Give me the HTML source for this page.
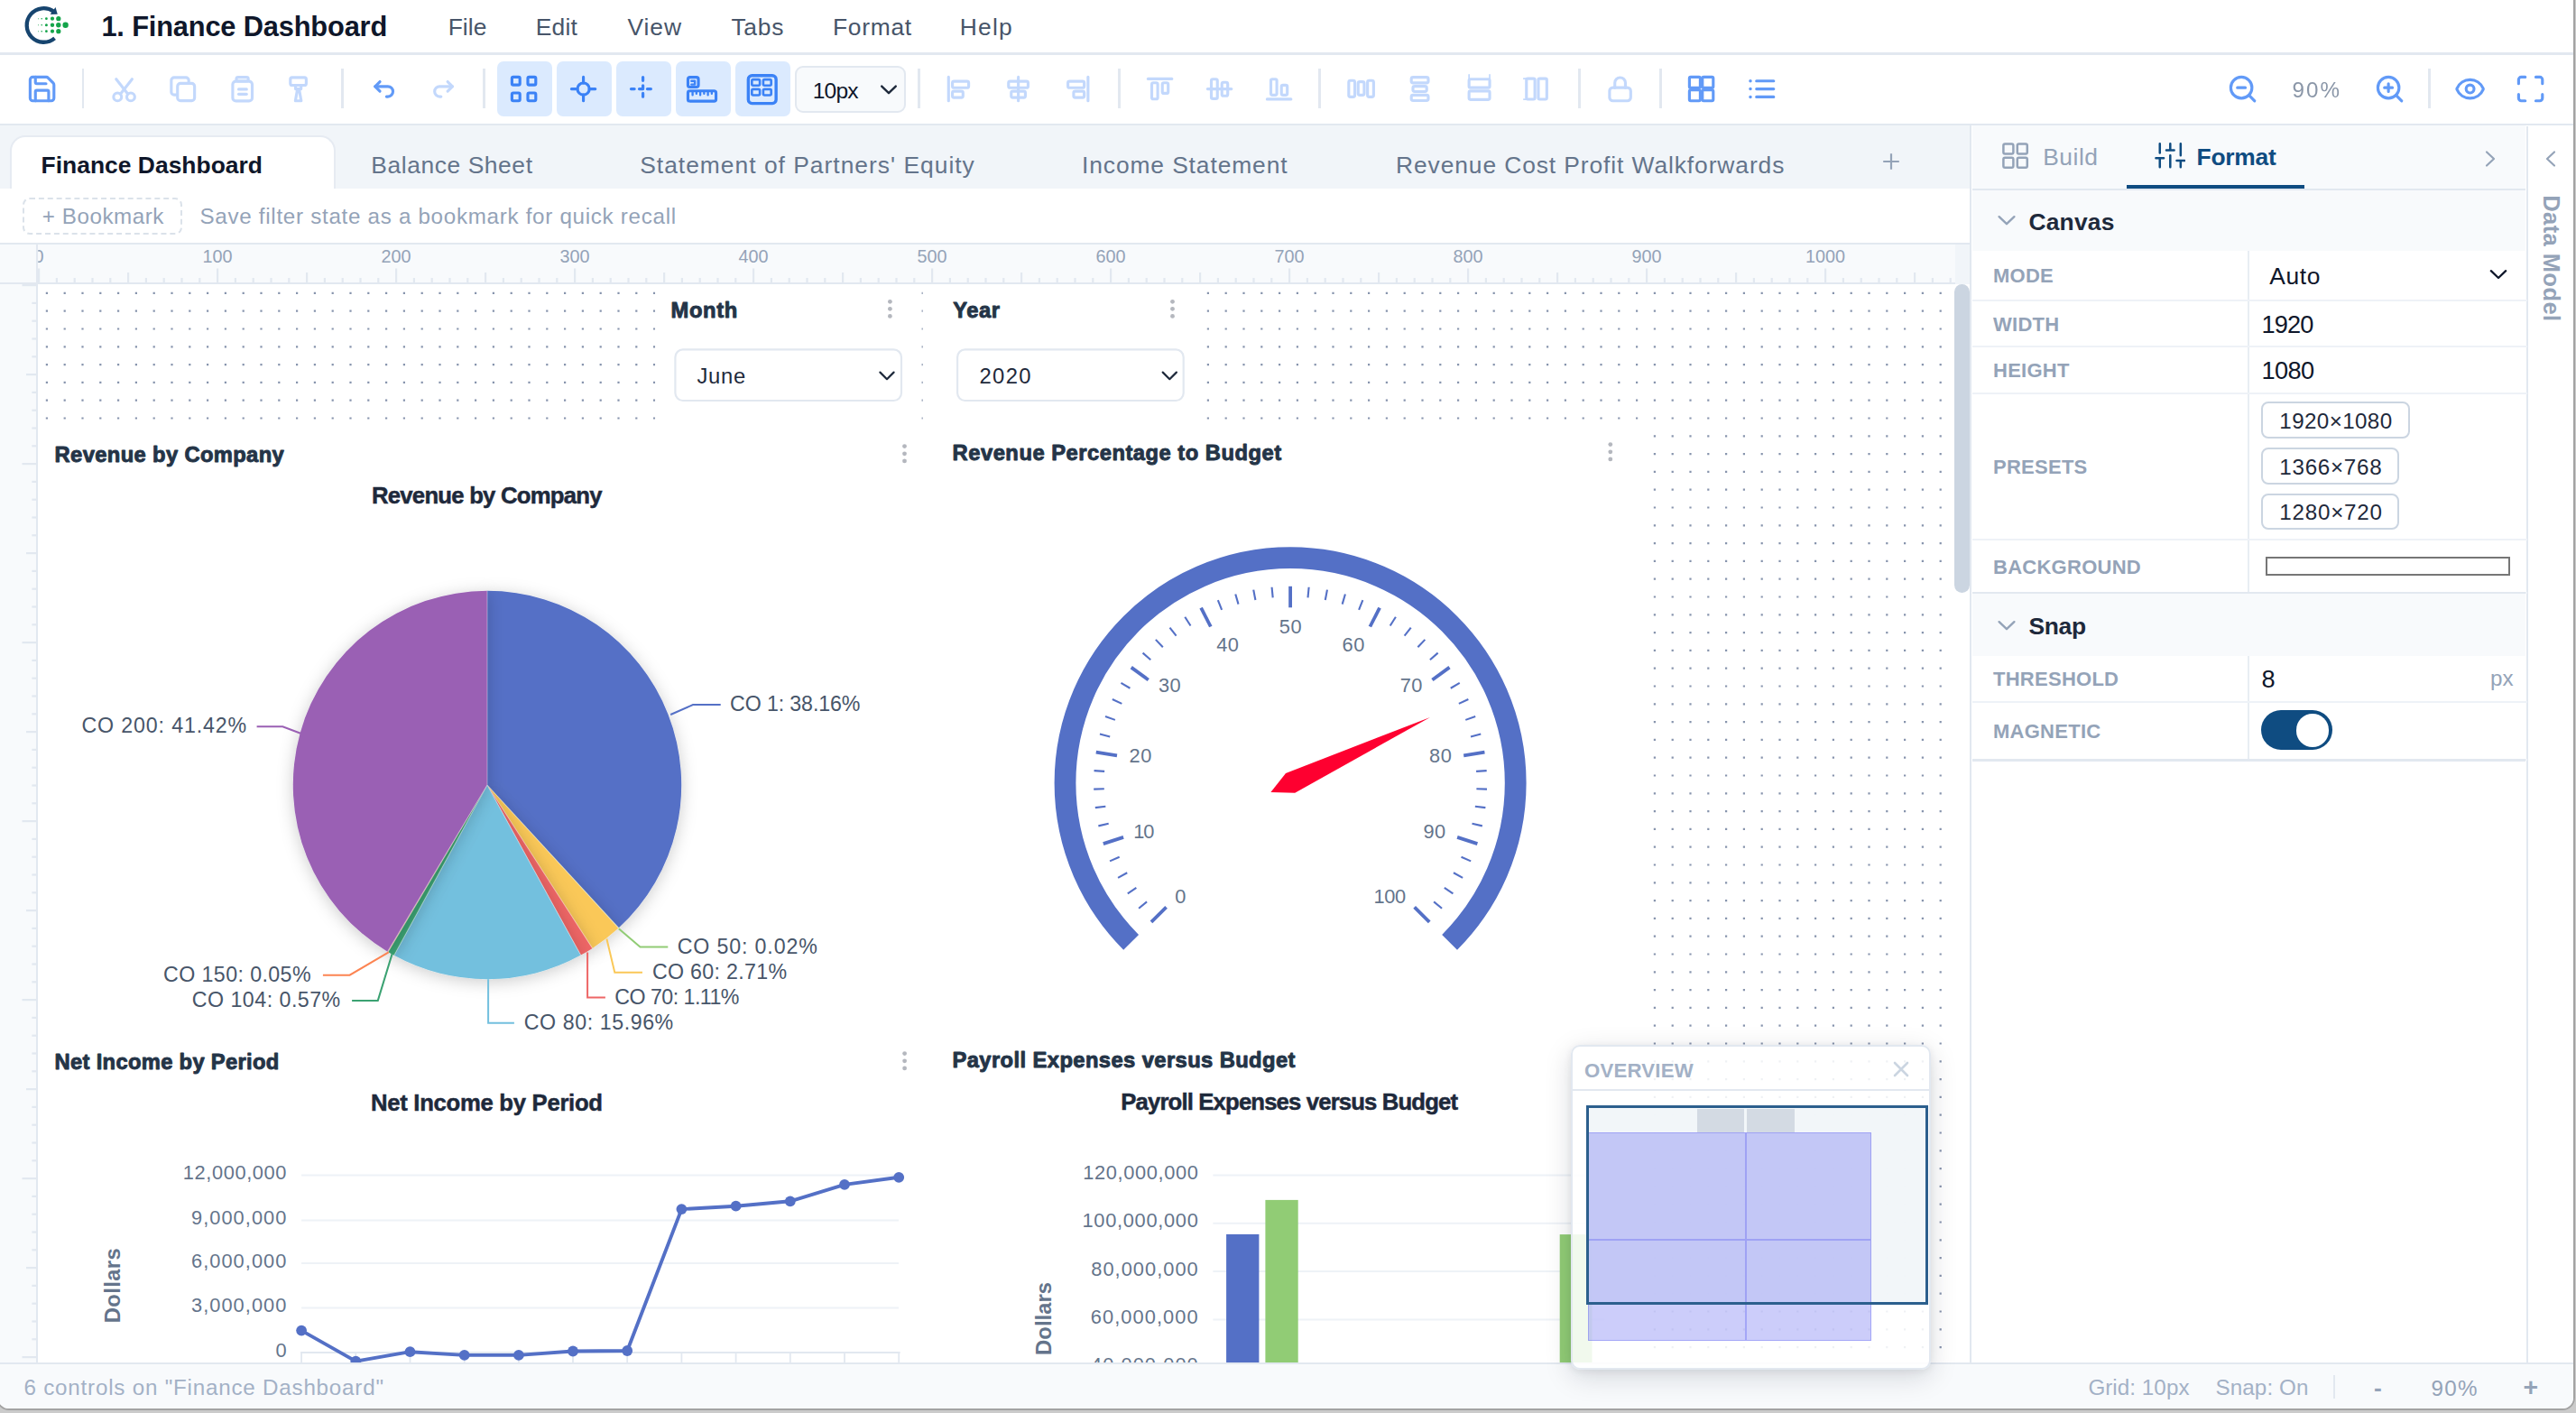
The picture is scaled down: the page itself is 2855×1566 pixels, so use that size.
<!DOCTYPE html>
<html><head><meta charset="utf-8"><title>1. Finance Dashboard</title>
<style>
html,body{margin:0;padding:0}
body{width:2855px;height:1566px;overflow:hidden;background:#cbcbcb;font-family:"Liberation Sans",sans-serif;position:relative}
.b{position:absolute;display:block}
.tx{left:0;top:0;overflow:visible;font-family:"Liberation Sans",sans-serif;white-space:pre}
#win{position:absolute;left:-4.4px;top:-40px;width:2858.3px;height:1602.8px;border:2.3px solid #a3a3a3;border-radius:14px;box-sizing:border-box;overflow:hidden;background:#fff}
#in{position:absolute;left:2.9px;top:38.6px;width:2855px;height:1566px}
</style></head><body>
<div id="win"><div id="in">
<div class="b" style="left:-4.00px;top:-4.00px;width:2860.00px;height:62.00px;background:#fff;"></div>
<div class="b" style="left:-4.00px;top:57.80px;width:2860.00px;height:2.20px;background:#e2e8f0;"></div>
<svg class="b" style="left:24px;top:2px" width="56" height="52" viewBox="0 0 56 52">
<path d="M34.55 9.76 A18.8 18.8 0 1 0 35.58 39.37" fill="none" stroke="#17456f" stroke-width="4.3"/>
<path d="M38.76 12.82 L36.52 5.0 L30.64 13.1 Z" fill="#17456f"/>
<g fill="#14a44a"><circle cx="47.6" cy="24.7" r="3.2"/>
<circle cx="39.8" cy="17.7" r="2.6"/><circle cx="39.8" cy="24.7" r="2.7"/><circle cx="39.8" cy="31.7" r="2.6"/>
<circle cx="33" cy="17.7" r="2.1"/><circle cx="33" cy="24.7" r="2.2"/><circle cx="33" cy="31.7" r="2.1"/>
<circle cx="26.4" cy="17.7" r="1.4"/><circle cx="26.4" cy="24.7" r="1.5"/><circle cx="26.4" cy="31.7" r="1.4"/>
<circle cx="21.2" cy="17.7" r="0.8"/><circle cx="21.2" cy="24.7" r="0.8"/><circle cx="21.2" cy="31.7" r="0.8"/>
<circle cx="17.6" cy="17.7" r="0.5"/><circle cx="17.6" cy="24.7" r="0.5"/><circle cx="17.6" cy="31.7" r="0.5"/></g></svg>
<svg class="b tx" width="1" height="1"><text x="111.40" y="38.80" font-size="30.8" font-weight="700" fill="#0f172a" letter-spacing="-0.168">1. Finance Dashboard</text></svg>
<svg class="b tx" width="1" height="1"><text x="495.70" y="38.00" font-size="26.4" fill="#475569" letter-spacing="0.033">File</text></svg>
<svg class="b tx" width="1" height="1"><text x="592.80" y="38.00" font-size="26.4" fill="#475569" letter-spacing="0.200">Edit</text></svg>
<svg class="b tx" width="1" height="1"><text x="694.50" y="38.00" font-size="26.4" fill="#475569" letter-spacing="0.933">View</text></svg>
<svg class="b tx" width="1" height="1"><text x="809.40" y="38.00" font-size="26.4" fill="#475569" letter-spacing="0.733">Tabs</text></svg>
<svg class="b tx" width="1" height="1"><text x="922.00" y="38.00" font-size="26.4" fill="#475569" letter-spacing="0.720">Format</text></svg>
<svg class="b tx" width="1" height="1"><text x="1062.80" y="38.00" font-size="26.4" fill="#475569" letter-spacing="1.233">Help</text></svg>
<div class="b" style="left:-4.00px;top:60.00px;width:2860.00px;height:76.60px;background:#fff;"></div>
<div class="b" style="left:-4.00px;top:136.60px;width:2860.00px;height:2.30px;background:#e2e8f0;"></div>
<div class="b" style="left:90.00px;top:75.40px;width:2.70px;height:44.00px;background:#e2e8f0;"></div>
<div class="b" style="left:377.80px;top:75.40px;width:2.70px;height:44.00px;background:#e2e8f0;"></div>
<div class="b" style="left:534.40px;top:75.40px;width:2.70px;height:44.00px;background:#e2e8f0;"></div>
<div class="b" style="left:1016.90px;top:75.40px;width:2.70px;height:44.00px;background:#e2e8f0;"></div>
<div class="b" style="left:1238.80px;top:75.40px;width:2.70px;height:44.00px;background:#e2e8f0;"></div>
<div class="b" style="left:1460.90px;top:75.40px;width:2.70px;height:44.00px;background:#e2e8f0;"></div>
<div class="b" style="left:1748.70px;top:75.40px;width:2.70px;height:44.00px;background:#e2e8f0;"></div>
<div class="b" style="left:1838.80px;top:75.40px;width:2.70px;height:44.00px;background:#e2e8f0;"></div>
<div class="b" style="left:2690.90px;top:75.40px;width:2.70px;height:44.00px;background:#e2e8f0;"></div>
<svg class="b" style="left:28.90px;top:80.80px;opacity:0.8;" width="35.2" height="35.2" viewBox="0 0 24 24" fill="none" stroke="#3b82f6" stroke-width="2.15" stroke-linecap="round" stroke-linejoin="round"><path d="M15.2 3a2 2 0 0 1 1.4.6l3.8 3.8a2 2 0 0 1 .6 1.4V19a2 2 0 0 1-2 2H5a2 2 0 0 1-2-2V5a2 2 0 0 1 2-2z"/><path d="M17 21v-7a1 1 0 0 0-1-1H8a1 1 0 0 0-1 1v7"/><path d="M7 3v4a1 1 0 0 0 1 1h7"/></svg>
<svg class="b" style="left:119.00px;top:80.80px;opacity:0.3;" width="35.2" height="35.2" viewBox="0 0 24 24" fill="none" stroke="#3b82f6" stroke-width="2.15" stroke-linecap="round" stroke-linejoin="round"><circle cx="7" cy="18" r="3"/><circle cx="17" cy="18" r="3"/><path d="M9.15 15.85 18 4.6"/><path d="M6 4.6l8.85 11.25"/></svg>
<svg class="b" style="left:184.80px;top:80.80px;opacity:0.3;" width="35.2" height="35.2" viewBox="0 0 24 24" fill="none" stroke="#3b82f6" stroke-width="2.15" stroke-linecap="round" stroke-linejoin="round"><rect x="3.3" y="3.3" width="13.2" height="13.2" rx="2.2"/><rect x="8" y="7.8" width="12.9" height="13.1" rx="2.2" fill="#fff"/></svg>
<svg class="b" style="left:250.90px;top:80.80px;opacity:0.3;" width="35.2" height="35.2" viewBox="0 0 24 24" fill="none" stroke="#3b82f6" stroke-width="2.15" stroke-linecap="round" stroke-linejoin="round"><rect x="4.7" y="6.2" width="14.75" height="14.9" rx="2.4"/><rect x="7.5" y="3.2" width="9" height="2.9" rx="1.3" fill="#fff"/><path d="M9.2 12.2h6"/><path d="M9.2 15.9h6"/></svg>
<svg class="b" style="left:312.80px;top:80.80px;opacity:0.3;" width="35.2" height="35.2" viewBox="0 0 24 24" fill="none" stroke="#3b82f6" stroke-width="2.15" stroke-linecap="round" stroke-linejoin="round"><rect x="6" y="3.3" width="12" height="5.9" rx="1.4"/><path d="M9.9 9.4v2.6h4.2V9.4"/><path d="M11.2 13.2h1.6l1.4 7.8H9.8z"/></svg>
<svg class="b" style="left:407.80px;top:80.80px;opacity:0.8;" width="35.2" height="35.2" viewBox="0 0 24 24" fill="none" stroke="#3b82f6" stroke-width="2.15" stroke-linecap="round" stroke-linejoin="round"><path d="M8.9 13.7 5.3 10.1l3.6-3.6"/><path d="M5.3 10.1h9.6a3.85 3.85 0 1 1 0 7.7h-1"/></svg>
<svg class="b" style="left:473.00px;top:80.80px;opacity:0.3;" width="35.2" height="35.2" viewBox="0 0 24 24" fill="none" stroke="#3b82f6" stroke-width="2.15" stroke-linecap="round" stroke-linejoin="round"><path d="M15.1 13.7l3.6-3.6-3.6-3.6"/><path d="M18.7 10.1H9.1a3.85 3.85 0 1 0 0 7.7h1"/></svg>
<div class="b" style="left:550.10px;top:67.00px;width:61.80px;height:61.90px;background:#dbeafe;border-radius:7px;"></div>
<div class="b" style="left:616.10px;top:67.00px;width:61.80px;height:61.90px;background:#dbeafe;border-radius:7px;"></div>
<div class="b" style="left:682.10px;top:67.00px;width:61.80px;height:61.90px;background:#dbeafe;border-radius:7px;"></div>
<div class="b" style="left:748.10px;top:67.00px;width:61.80px;height:61.90px;background:#dbeafe;border-radius:7px;"></div>
<div class="b" style="left:814.10px;top:67.00px;width:61.80px;height:61.90px;background:#dbeafe;border-radius:7px;"></div>
<svg class="b" style="left:562.50px;top:80.50px;opacity:1;" width="35.2" height="35.2" viewBox="0 0 24 24" fill="none" stroke="#3b82f6" stroke-width="2.15" stroke-linecap="round" stroke-linejoin="round"><rect x="3" y="3" width="6" height="6" rx="1"/><rect x="15" y="3" width="6" height="6" rx="1"/><rect x="3" y="15" width="6" height="6" rx="1"/><rect x="15" y="15" width="6" height="6" rx="1"/></svg>
<svg class="b" style="left:628.50px;top:80.50px;opacity:1;" width="35.2" height="35.2" viewBox="0 0 24 24" fill="none" stroke="#3b82f6" stroke-width="2.15" stroke-linecap="round" stroke-linejoin="round"><circle cx="12" cy="12" r="4.5"/><path d="M12 3v4.5M12 16.5V21M3 12h4.5M16.5 12H21"/></svg>
<svg class="b" style="left:694.80px;top:80.60px;opacity:1;" width="35.2" height="35.2" viewBox="0 0 24 24" fill="none" stroke="#3b82f6" stroke-width="2.15" stroke-linecap="round" stroke-linejoin="round"><path d="M3.05 12h2.5M9.2 12H12M15.3 12h2.7M12 3.15v2.5M12 9.4V12M12 15.3v2.6" stroke-width="2.2"/></svg>
<svg class="b" style="left:760.60px;top:80.40px;opacity:1;overflow:visible;" width="35.2" height="35.2" viewBox="0 0 24 24" fill="none" stroke="#3b82f6" stroke-width="2.15" stroke-linecap="round" stroke-linejoin="round"><rect x="1" y="13.5" width="21.2" height="7.7" rx="1.5"/><rect x="1" y="3.2" width="7.9" height="7.4" rx="1.5"/><path d="M3.6 6h2.6v2.6H3.6" stroke-width="1.6"/><path d="M4.5 14v2.6M7.4 14v1.5M10.3 14v2.6M13.2 14v1.5M16.1 14v2.6M19 14v1.5" stroke-width="1.6"/></svg>
<svg class="b" style="left:826.30px;top:80.30px;opacity:1;overflow:visible;" width="35.2" height="35.2" viewBox="0 0 24 24" fill="none" stroke="#3b82f6" stroke-width="2.15" stroke-linecap="round" stroke-linejoin="round"><rect x="1.6" y="1.9" width="21" height="21" rx="2.8" stroke-width="2.3"/><g stroke-width="1.8"><rect x="4.3" y="4.9" width="6" height="4.5" rx="1"/><rect x="12.9" y="4.9" width="6" height="4.5" rx="1"/><rect x="4.3" y="12.2" width="6" height="4.5" rx="1"/><rect x="12.9" y="12.2" width="6" height="4.5" rx="1"/></g></svg>
<div class="b" style="left:880.40px;top:72.60px;width:123.20px;height:51.90px;background:#f8fafc;border:2.2px solid #e2e8f0;border-radius:9px;box-sizing:border-box;"></div>
<svg class="b tx" width="1" height="1"><text x="899.70" y="107.60" font-size="24.6" fill="#0f172a" letter-spacing="-0.833">10px</text></svg>
<svg class="b" style="left:973px;top:89px" width="22" height="18" viewBox="0 0 22 18" fill="none" stroke="#1e293b" stroke-width="2.4" stroke-linecap="round" stroke-linejoin="round"><path d="M3.2 5.6 11 13.2 18.8 5.6"/></svg>
<svg class="b" style="left:1044.90px;top:80.80px;opacity:0.3;" width="35.2" height="35.2" viewBox="0 0 24 24" fill="none" stroke="#3b82f6" stroke-width="2.15" stroke-linecap="round" stroke-linejoin="round"><path d="M4.3 3v18"/><rect x="7.2" y="6.2" width="12.3" height="4.9" rx="1.2"/><rect x="7.2" y="13.7" width="8" height="4.8" rx="1.2"/></svg>
<svg class="b" style="left:1110.20px;top:80.80px;opacity:0.3;" width="35.2" height="35.2" viewBox="0 0 24 24" fill="none" stroke="#3b82f6" stroke-width="2.15" stroke-linecap="round" stroke-linejoin="round"><path d="M12 3v18"/><rect x="4.6" y="6.2" width="14.8" height="4.9" rx="1.2"/><rect x="6.65" y="13.7" width="10.7" height="4.8" rx="1.2"/></svg>
<svg class="b" style="left:1176.90px;top:80.80px;opacity:0.3;" width="35.2" height="35.2" viewBox="0 0 24 24" fill="none" stroke="#3b82f6" stroke-width="2.15" stroke-linecap="round" stroke-linejoin="round"><path d="M19.7 3v18"/><rect x="4.5" y="6.2" width="12.3" height="4.9" rx="1.2"/><rect x="8.8" y="13.7" width="8" height="4.8" rx="1.2"/></svg>
<svg class="b" style="left:1267.20px;top:80.80px;opacity:0.3;" width="35.2" height="35.2" viewBox="0 0 24 24" fill="none" stroke="#3b82f6" stroke-width="2.15" stroke-linecap="round" stroke-linejoin="round"><path d="M3 4.4h18"/><rect x="5.8" y="7.3" width="4.5" height="12.3" rx="1.2"/><rect x="13.8" y="7.3" width="4.4" height="8" rx="1.2"/></svg>
<svg class="b" style="left:1333.00px;top:80.80px;opacity:0.3;" width="35.2" height="35.2" viewBox="0 0 24 24" fill="none" stroke="#3b82f6" stroke-width="2.15" stroke-linecap="round" stroke-linejoin="round"><path d="M3 12h18"/><rect x="5.8" y="4.6" width="4.6" height="14.8" rx="1.2"/><rect x="13.8" y="7" width="4.4" height="10.2" rx="1.2"/></svg>
<svg class="b" style="left:1399.00px;top:80.80px;opacity:0.3;" width="35.2" height="35.2" viewBox="0 0 24 24" fill="none" stroke="#3b82f6" stroke-width="2.15" stroke-linecap="round" stroke-linejoin="round"><path d="M3 19.7h18"/><rect x="5.8" y="4.6" width="4.5" height="12" rx="1.2"/><rect x="13.8" y="9.1" width="4.4" height="7.5" rx="1.2"/></svg>
<svg class="b" style="left:1490.10px;top:80.80px;opacity:0.3;" width="35.2" height="35.2" viewBox="0 0 24 24" fill="none" stroke="#3b82f6" stroke-width="2.15" stroke-linecap="round" stroke-linejoin="round"><rect x="2.6" y="5.6" width="4.6" height="12.4" rx="1.3"/><rect x="9.7" y="6.6" width="4.6" height="10" rx="1.3"/><rect x="16.8" y="5.6" width="4.6" height="12.4" rx="1.3"/></svg>
<svg class="b" style="left:1555.90px;top:80.80px;opacity:0.3;" width="35.2" height="35.2" viewBox="0 0 24 24" fill="none" stroke="#3b82f6" stroke-width="2.15" stroke-linecap="round" stroke-linejoin="round"><rect x="5.6" y="3.2" width="12.8" height="4.2" rx="1.3"/><rect x="6.8" y="10" width="10.4" height="4" rx="1.3"/><rect x="5.6" y="16.6" width="12.8" height="4.2" rx="1.3"/></svg>
<svg class="b" style="left:1621.90px;top:80.80px;opacity:0.3;" width="35.2" height="35.2" viewBox="0 0 24 24" fill="none" stroke="#3b82f6" stroke-width="2.15" stroke-linecap="round" stroke-linejoin="round"><path d="M4.2 1.2v3M19.8 1.2v3" stroke-width="1.2"/><rect x="4.2" y="4.6" width="15.6" height="6.4" rx="1"/><rect x="4.2" y="13.6" width="15.6" height="6.4" rx="1"/></svg>
<svg class="b" style="left:1684.80px;top:80.80px;opacity:0.3;" width="35.2" height="35.2" viewBox="0 0 24 24" fill="none" stroke="#3b82f6" stroke-width="2.15" stroke-linecap="round" stroke-linejoin="round"><path d="M2.6 4.2h3M2.6 19.8h3" stroke-width="1.2"/><rect x="4.6" y="4.2" width="6.4" height="15.6" rx="1"/><rect x="13.6" y="4.2" width="6.4" height="15.6" rx="1"/></svg>
<svg class="b" style="left:1777.80px;top:80.80px;opacity:0.3;" width="35.2" height="35.2" viewBox="0 0 24 24" fill="none" stroke="#3b82f6" stroke-width="2.15" stroke-linecap="round" stroke-linejoin="round"><rect x="4" y="11" width="16" height="10" rx="2.5"/><path d="M8 11V7.4a4 4 0 0 1 8 0V11"/></svg>
<svg class="b" style="left:1867.80px;top:80.80px;opacity:0.8;" width="35.2" height="35.2" viewBox="0 0 24 24" fill="none" stroke="#3b82f6" stroke-width="2.15" stroke-linecap="round" stroke-linejoin="round"><rect x="3" y="3" width="8.2" height="8.2" rx="1"/><rect x="12.8" y="3" width="8.2" height="8.2" rx="1"/><rect x="12.8" y="12.8" width="8.2" height="8.2" rx="1"/><rect x="3" y="12.8" width="8.2" height="8.2" rx="1"/></svg>
<svg class="b" style="left:1934.40px;top:80.80px;opacity:0.8;" width="35.2" height="35.2" viewBox="0 0 24 24" fill="none" stroke="#3b82f6" stroke-width="2.15" stroke-linecap="round" stroke-linejoin="round"><path d="M3.4 6h.01M3.4 12h.01M3.4 18h.01" stroke-width="2.4"/><path d="M8 6h13M8 12h13M8 18h13"/></svg>
<svg class="b" style="left:2467.60px;top:80.80px;opacity:0.8;" width="35.2" height="35.2" viewBox="0 0 24 24" fill="none" stroke="#3b82f6" stroke-width="2.15" stroke-linecap="round" stroke-linejoin="round"><circle cx="11" cy="11" r="8"/><path d="M21 21l-4.35-4.35M8 11h6"/></svg>
<svg class="b tx" width="1" height="1"><text x="2539.60" y="107.30" font-size="24.2" fill="#64748b" letter-spacing="2.000" opacity="0.75">90%</text></svg>
<svg class="b" style="left:2630.70px;top:80.80px;opacity:0.8;" width="35.2" height="35.2" viewBox="0 0 24 24" fill="none" stroke="#3b82f6" stroke-width="2.15" stroke-linecap="round" stroke-linejoin="round"><circle cx="11" cy="11" r="8"/><path d="M21 21l-4.35-4.35M8 11h6M11 8v6"/></svg>
<svg class="b" style="left:2719.90px;top:80.80px;opacity:0.8;" width="35.2" height="35.2" viewBox="0 0 24 24" fill="none" stroke="#3b82f6" stroke-width="2.15" stroke-linecap="round" stroke-linejoin="round"><path d="M2.06 12.35a1 1 0 0 1 0-.7 10.75 10.75 0 0 1 19.88 0 1 1 0 0 1 0 .7 10.75 10.75 0 0 1-19.88 0"/><circle cx="12" cy="12" r="3"/></svg>
<svg class="b" style="left:2786.00px;top:80.80px;opacity:0.8;" width="35.2" height="35.2" viewBox="0 0 24 24" fill="none" stroke="#3b82f6" stroke-width="2.15" stroke-linecap="round" stroke-linejoin="round"><path d="M8 3H5a2 2 0 0 0-2 2v3M21 8V5a2 2 0 0 0-2-2h-3M3 16v3a2 2 0 0 0 2 2h3M16 21h3a2 2 0 0 0 2-2v-3"/></svg>
<div class="b" style="left:-4.00px;top:138.90px;width:2186.20px;height:69.70px;background:#f1f5f9;"></div>
<div class="b" style="left:10.60px;top:149.80px;width:361.30px;height:60.20px;background:#fff;border:2.2px solid #e6ebf2;border-bottom:none;border-radius:17px 17px 0 0;box-sizing:border-box;"></div>
<svg class="b tx" width="1" height="1"><text x="44.60" y="191.40" font-size="26.4" font-weight="700" fill="#0f172a" letter-spacing="0.025">Finance Dashboard</text></svg>
<svg class="b tx" width="1" height="1"><text x="410.30" y="191.40" font-size="26.4" fill="#64748b" letter-spacing="0.583">Balance Sheet</text></svg>
<svg class="b tx" width="1" height="1"><text x="708.20" y="191.40" font-size="26.4" fill="#64748b" letter-spacing="1.007">Statement of Partners' Equity</text></svg>
<svg class="b tx" width="1" height="1"><text x="1198.00" y="191.40" font-size="26.4" fill="#64748b" letter-spacing="0.893">Income Statement</text></svg>
<svg class="b tx" width="1" height="1"><text x="1546.00" y="191.40" font-size="26.4" fill="#64748b" letter-spacing="0.903">Revenue Cost Profit Walkforwards</text></svg>
<svg class="b" style="left:2084px;top:167px" width="22" height="22" viewBox="0 0 22 22" stroke="#94a3b8" stroke-width="2.2" fill="none"><path d="M11 2.2v17.6M2.2 11h17.6"/></svg>
<div class="b" style="left:-4.00px;top:208.60px;width:2186.20px;height:59.50px;background:#fff;"></div>
<div class="b" style="left:-4.00px;top:268.10px;width:2186.20px;height:2.20px;background:#e2e8f0;"></div>
<div class="b" style="left:24.50px;top:218.60px;width:176.50px;height:40.40px;border:2px dashed #dbe2ea;border-radius:8px;box-sizing:border-box;"></div>
<svg class="b tx" width="1" height="1"><text x="45.80" y="247.00" font-size="24.2" fill="#94a3b8" letter-spacing="0.544">+ Bookmark</text></svg>
<svg class="b tx" width="1" height="1"><text x="220.50" y="247.00" font-size="24.2" fill="#94a3b8" letter-spacing="0.700">Save filter state as a bookmark for quick recall</text></svg>
<div class="b" style="left:-0.8px;top:-0.9px;width:0;height:0">
<div class="b" style="left:-4.00px;top:271.20px;width:2171.20px;height:41.80px;background:#f8fafc;"></div>
<div class="b" style="left:2167.20px;top:271.20px;width:15.80px;height:44.00px;background:#f1f5f9;"></div>
<div class="b" style="left:-4.00px;top:313.00px;width:2171.20px;height:2.20px;background:#e2e8f0;"></div>
<div class="b" style="left:-4.00px;top:315.20px;width:44.00px;height:1195.80px;background:#f8fafc;"></div>
<div class="b" style="left:40.00px;top:271.20px;width:2.20px;height:1239.80px;background:#e2e8f0;"></div>
<svg class="b" style="left:0;top:0" width="2184" height="1512" viewBox="0 0 2184 1512"><g fill="#e2e8f0"><rect x="42.00" y="297.50" width="2.2" height="15.5"/><rect x="61.80" y="308.00" width="2.2" height="5"/><rect x="81.60" y="308.00" width="2.2" height="5"/><rect x="101.40" y="308.00" width="2.2" height="5"/><rect x="121.20" y="308.00" width="2.2" height="5"/><rect x="141.00" y="302.00" width="2.2" height="11"/><rect x="160.80" y="308.00" width="2.2" height="5"/><rect x="180.60" y="308.00" width="2.2" height="5"/><rect x="200.40" y="308.00" width="2.2" height="5"/><rect x="220.20" y="308.00" width="2.2" height="5"/><rect x="240.00" y="297.50" width="2.2" height="15.5"/><rect x="259.80" y="308.00" width="2.2" height="5"/><rect x="279.60" y="308.00" width="2.2" height="5"/><rect x="299.40" y="308.00" width="2.2" height="5"/><rect x="319.20" y="308.00" width="2.2" height="5"/><rect x="339.00" y="302.00" width="2.2" height="11"/><rect x="358.80" y="308.00" width="2.2" height="5"/><rect x="378.60" y="308.00" width="2.2" height="5"/><rect x="398.40" y="308.00" width="2.2" height="5"/><rect x="418.20" y="308.00" width="2.2" height="5"/><rect x="438.00" y="297.50" width="2.2" height="15.5"/><rect x="457.80" y="308.00" width="2.2" height="5"/><rect x="477.60" y="308.00" width="2.2" height="5"/><rect x="497.40" y="308.00" width="2.2" height="5"/><rect x="517.20" y="308.00" width="2.2" height="5"/><rect x="537.00" y="302.00" width="2.2" height="11"/><rect x="556.80" y="308.00" width="2.2" height="5"/><rect x="576.60" y="308.00" width="2.2" height="5"/><rect x="596.40" y="308.00" width="2.2" height="5"/><rect x="616.20" y="308.00" width="2.2" height="5"/><rect x="636.00" y="297.50" width="2.2" height="15.5"/><rect x="655.80" y="308.00" width="2.2" height="5"/><rect x="675.60" y="308.00" width="2.2" height="5"/><rect x="695.40" y="308.00" width="2.2" height="5"/><rect x="715.20" y="308.00" width="2.2" height="5"/><rect x="735.00" y="302.00" width="2.2" height="11"/><rect x="754.80" y="308.00" width="2.2" height="5"/><rect x="774.60" y="308.00" width="2.2" height="5"/><rect x="794.40" y="308.00" width="2.2" height="5"/><rect x="814.20" y="308.00" width="2.2" height="5"/><rect x="834.00" y="297.50" width="2.2" height="15.5"/><rect x="853.80" y="308.00" width="2.2" height="5"/><rect x="873.60" y="308.00" width="2.2" height="5"/><rect x="893.40" y="308.00" width="2.2" height="5"/><rect x="913.20" y="308.00" width="2.2" height="5"/><rect x="933.00" y="302.00" width="2.2" height="11"/><rect x="952.80" y="308.00" width="2.2" height="5"/><rect x="972.60" y="308.00" width="2.2" height="5"/><rect x="992.40" y="308.00" width="2.2" height="5"/><rect x="1012.20" y="308.00" width="2.2" height="5"/><rect x="1032.00" y="297.50" width="2.2" height="15.5"/><rect x="1051.80" y="308.00" width="2.2" height="5"/><rect x="1071.60" y="308.00" width="2.2" height="5"/><rect x="1091.40" y="308.00" width="2.2" height="5"/><rect x="1111.20" y="308.00" width="2.2" height="5"/><rect x="1131.00" y="302.00" width="2.2" height="11"/><rect x="1150.80" y="308.00" width="2.2" height="5"/><rect x="1170.60" y="308.00" width="2.2" height="5"/><rect x="1190.40" y="308.00" width="2.2" height="5"/><rect x="1210.20" y="308.00" width="2.2" height="5"/><rect x="1230.00" y="297.50" width="2.2" height="15.5"/><rect x="1249.80" y="308.00" width="2.2" height="5"/><rect x="1269.60" y="308.00" width="2.2" height="5"/><rect x="1289.40" y="308.00" width="2.2" height="5"/><rect x="1309.20" y="308.00" width="2.2" height="5"/><rect x="1329.00" y="302.00" width="2.2" height="11"/><rect x="1348.80" y="308.00" width="2.2" height="5"/><rect x="1368.60" y="308.00" width="2.2" height="5"/><rect x="1388.40" y="308.00" width="2.2" height="5"/><rect x="1408.20" y="308.00" width="2.2" height="5"/><rect x="1428.00" y="297.50" width="2.2" height="15.5"/><rect x="1447.80" y="308.00" width="2.2" height="5"/><rect x="1467.60" y="308.00" width="2.2" height="5"/><rect x="1487.40" y="308.00" width="2.2" height="5"/><rect x="1507.20" y="308.00" width="2.2" height="5"/><rect x="1527.00" y="302.00" width="2.2" height="11"/><rect x="1546.80" y="308.00" width="2.2" height="5"/><rect x="1566.60" y="308.00" width="2.2" height="5"/><rect x="1586.40" y="308.00" width="2.2" height="5"/><rect x="1606.20" y="308.00" width="2.2" height="5"/><rect x="1626.00" y="297.50" width="2.2" height="15.5"/><rect x="1645.80" y="308.00" width="2.2" height="5"/><rect x="1665.60" y="308.00" width="2.2" height="5"/><rect x="1685.40" y="308.00" width="2.2" height="5"/><rect x="1705.20" y="308.00" width="2.2" height="5"/><rect x="1725.00" y="302.00" width="2.2" height="11"/><rect x="1744.80" y="308.00" width="2.2" height="5"/><rect x="1764.60" y="308.00" width="2.2" height="5"/><rect x="1784.40" y="308.00" width="2.2" height="5"/><rect x="1804.20" y="308.00" width="2.2" height="5"/><rect x="1824.00" y="297.50" width="2.2" height="15.5"/><rect x="1843.80" y="308.00" width="2.2" height="5"/><rect x="1863.60" y="308.00" width="2.2" height="5"/><rect x="1883.40" y="308.00" width="2.2" height="5"/><rect x="1903.20" y="308.00" width="2.2" height="5"/><rect x="1923.00" y="302.00" width="2.2" height="11"/><rect x="1942.80" y="308.00" width="2.2" height="5"/><rect x="1962.60" y="308.00" width="2.2" height="5"/><rect x="1982.40" y="308.00" width="2.2" height="5"/><rect x="2002.20" y="308.00" width="2.2" height="5"/><rect x="2022.00" y="297.50" width="2.2" height="15.5"/><rect x="2041.80" y="308.00" width="2.2" height="5"/><rect x="2061.60" y="308.00" width="2.2" height="5"/><rect x="2081.40" y="308.00" width="2.2" height="5"/><rect x="2101.20" y="308.00" width="2.2" height="5"/><rect x="2121.00" y="302.00" width="2.2" height="11"/><rect x="2140.80" y="308.00" width="2.2" height="5"/><rect x="2160.60" y="308.00" width="2.2" height="5"/><rect x="24.50" y="315.00" width="15.5" height="2.2"/><rect x="35.40" y="334.80" width="4.6" height="2.2"/><rect x="35.40" y="354.60" width="4.6" height="2.2"/><rect x="35.40" y="374.40" width="4.6" height="2.2"/><rect x="35.40" y="394.20" width="4.6" height="2.2"/><rect x="29.00" y="414.00" width="11" height="2.2"/><rect x="35.40" y="433.80" width="4.6" height="2.2"/><rect x="35.40" y="453.60" width="4.6" height="2.2"/><rect x="35.40" y="473.40" width="4.6" height="2.2"/><rect x="35.40" y="493.20" width="4.6" height="2.2"/><rect x="24.50" y="513.00" width="15.5" height="2.2"/><rect x="35.40" y="532.80" width="4.6" height="2.2"/><rect x="35.40" y="552.60" width="4.6" height="2.2"/><rect x="35.40" y="572.40" width="4.6" height="2.2"/><rect x="35.40" y="592.20" width="4.6" height="2.2"/><rect x="29.00" y="612.00" width="11" height="2.2"/><rect x="35.40" y="631.80" width="4.6" height="2.2"/><rect x="35.40" y="651.60" width="4.6" height="2.2"/><rect x="35.40" y="671.40" width="4.6" height="2.2"/><rect x="35.40" y="691.20" width="4.6" height="2.2"/><rect x="24.50" y="711.00" width="15.5" height="2.2"/><rect x="35.40" y="730.80" width="4.6" height="2.2"/><rect x="35.40" y="750.60" width="4.6" height="2.2"/><rect x="35.40" y="770.40" width="4.6" height="2.2"/><rect x="35.40" y="790.20" width="4.6" height="2.2"/><rect x="29.00" y="810.00" width="11" height="2.2"/><rect x="35.40" y="829.80" width="4.6" height="2.2"/><rect x="35.40" y="849.60" width="4.6" height="2.2"/><rect x="35.40" y="869.40" width="4.6" height="2.2"/><rect x="35.40" y="889.20" width="4.6" height="2.2"/><rect x="24.50" y="909.00" width="15.5" height="2.2"/><rect x="35.40" y="928.80" width="4.6" height="2.2"/><rect x="35.40" y="948.60" width="4.6" height="2.2"/><rect x="35.40" y="968.40" width="4.6" height="2.2"/><rect x="35.40" y="988.20" width="4.6" height="2.2"/><rect x="29.00" y="1008.00" width="11" height="2.2"/><rect x="35.40" y="1027.80" width="4.6" height="2.2"/><rect x="35.40" y="1047.60" width="4.6" height="2.2"/><rect x="35.40" y="1067.40" width="4.6" height="2.2"/><rect x="35.40" y="1087.20" width="4.6" height="2.2"/><rect x="24.50" y="1107.00" width="15.5" height="2.2"/><rect x="35.40" y="1126.80" width="4.6" height="2.2"/><rect x="35.40" y="1146.60" width="4.6" height="2.2"/><rect x="35.40" y="1166.40" width="4.6" height="2.2"/><rect x="35.40" y="1186.20" width="4.6" height="2.2"/><rect x="29.00" y="1206.00" width="11" height="2.2"/><rect x="35.40" y="1225.80" width="4.6" height="2.2"/><rect x="35.40" y="1245.60" width="4.6" height="2.2"/><rect x="35.40" y="1265.40" width="4.6" height="2.2"/><rect x="35.40" y="1285.20" width="4.6" height="2.2"/><rect x="24.50" y="1305.00" width="15.5" height="2.2"/><rect x="35.40" y="1324.80" width="4.6" height="2.2"/><rect x="35.40" y="1344.60" width="4.6" height="2.2"/><rect x="35.40" y="1364.40" width="4.6" height="2.2"/><rect x="35.40" y="1384.20" width="4.6" height="2.2"/><rect x="29.00" y="1404.00" width="11" height="2.2"/><rect x="35.40" y="1423.80" width="4.6" height="2.2"/><rect x="35.40" y="1443.60" width="4.6" height="2.2"/><rect x="35.40" y="1463.40" width="4.6" height="2.2"/><rect x="35.40" y="1483.20" width="4.6" height="2.2"/><rect x="24.50" y="1503.00" width="15.5" height="2.2"/></g><g clip-path="url(#rc)"><text x="37.60" y="290.70" font-size="19.8" fill="#94a3b8">0</text><text x="224.60" y="290.70" font-size="19.8" fill="#94a3b8">100</text><text x="422.60" y="290.70" font-size="19.8" fill="#94a3b8">200</text><text x="620.60" y="290.70" font-size="19.8" fill="#94a3b8">300</text><text x="818.60" y="290.70" font-size="19.8" fill="#94a3b8">400</text><text x="1016.60" y="290.70" font-size="19.8" fill="#94a3b8">500</text><text x="1214.60" y="290.70" font-size="19.8" fill="#94a3b8">600</text><text x="1412.60" y="290.70" font-size="19.8" fill="#94a3b8">700</text><text x="1610.60" y="290.70" font-size="19.8" fill="#94a3b8">800</text><text x="1808.60" y="290.70" font-size="19.8" fill="#94a3b8">900</text><text x="2001.10" y="290.70" font-size="19.8" fill="#94a3b8">1000</text></g><defs><clipPath id="rc"><rect x="42.2" y="271" width="2125" height="42"/></clipPath></defs></svg>
</div>
<div class="b" style="left:41.4px;top:314.3px;width:2123.8px;height:1194.8px;background:#fff;overflow:hidden">
<svg class="b" style="left:-42.2px;top:-315.2px" width="2170" height="1512" viewBox="0 0 2170 1512" font-family="Liberation Sans, sans-serif"><path d="M50.8 324.90H2152M50.8 344.70H2152M50.8 364.50H2152M50.8 384.30H2152M50.8 404.10H2152M50.8 423.90H2152M50.8 443.70H2152M50.8 463.50H2152M50.8 483.30H2152M50.8 503.10H2152M50.8 522.90H2152M50.8 542.70H2152M50.8 562.50H2152M50.8 582.30H2152M50.8 602.10H2152M50.8 621.90H2152M50.8 641.70H2152M50.8 661.50H2152M50.8 681.30H2152M50.8 701.10H2152M50.8 720.90H2152M50.8 740.70H2152M50.8 760.50H2152M50.8 780.30H2152M50.8 800.10H2152M50.8 819.90H2152M50.8 839.70H2152M50.8 859.50H2152M50.8 879.30H2152M50.8 899.10H2152M50.8 918.90H2152M50.8 938.70H2152M50.8 958.50H2152M50.8 978.30H2152M50.8 998.10H2152M50.8 1017.90H2152M50.8 1037.70H2152M50.8 1057.50H2152M50.8 1077.30H2152M50.8 1097.10H2152M50.8 1116.90H2152M50.8 1136.70H2152M50.8 1156.50H2152M50.8 1176.30H2152M50.8 1196.10H2152M50.8 1215.90H2152M50.8 1235.70H2152M50.8 1255.50H2152M50.8 1275.30H2152M50.8 1295.10H2152M50.8 1314.90H2152M50.8 1334.70H2152M50.8 1354.50H2152M50.8 1374.30H2152M50.8 1394.10H2152M50.8 1413.90H2152M50.8 1433.70H2152M50.8 1453.50H2152M50.8 1473.30H2152M50.8 1493.10H2152" stroke="#8794ad" stroke-width="2.2" stroke-dasharray="2.2 17.6" fill="none"/><rect x="726.2" y="316" width="295.4" height="158" fill="#fff"/><rect x="1022.7" y="316" width="306.29999999999995" height="158" fill="#fff"/><rect x="42" y="473.6" width="1782" height="1038.4" fill="#fff"/><text x="743.50" y="352.10" font-size="23.76" font-weight="700" fill="#243447" letter-spacing="0.625" stroke="#243447" stroke-width="0.9" stroke-linejoin="round">Month</text><text x="1056.30" y="352.10" font-size="23.76" font-weight="700" fill="#243447" letter-spacing="0.533" stroke="#243447" stroke-width="0.9" stroke-linejoin="round">Year</text><circle cx="986.4" cy="334.3" r="2.4" fill="#b4b7be"/><circle cx="986.4" cy="342.3" r="2.4" fill="#b4b7be"/><circle cx="986.4" cy="350.4" r="2.4" fill="#b4b7be"/><circle cx="1299.5" cy="334.3" r="2.4" fill="#b4b7be"/><circle cx="1299.5" cy="342.3" r="2.4" fill="#b4b7be"/><circle cx="1299.5" cy="350.4" r="2.4" fill="#b4b7be"/><rect x="748.4" y="387.4" width="250.6" height="56.6" rx="8.5" fill="#fff" stroke="#e2e8f0" stroke-width="2.2"/><rect x="1061.1" y="387.4" width="250.6" height="56.6" rx="8.5" fill="#fff" stroke="#e2e8f0" stroke-width="2.2"/><text x="772.50" y="424.80" font-size="23.8" fill="#1e293b" letter-spacing="0.700">June</text><text x="1085.50" y="424.80" font-size="23.8" fill="#1e293b" letter-spacing="1.333">2020</text><path d="M975.4 412.6l7.6 7.6 7.6-7.6" fill="none" stroke="#1e293b" stroke-width="2.2" stroke-linecap="round" stroke-linejoin="round"/><path d="M1288.7 412.6l7.6 7.6 7.6-7.6" fill="none" stroke="#1e293b" stroke-width="2.2" stroke-linecap="round" stroke-linejoin="round"/><text x="60.60" y="511.70" font-size="23.76" font-weight="700" fill="#243447" letter-spacing="0.353" stroke="#243447" stroke-width="0.9" stroke-linejoin="round">Revenue by Company</text><circle cx="1002.5" cy="494.6" r="2.4" fill="#b4b7be"/><circle cx="1002.5" cy="502.8" r="2.4" fill="#b4b7be"/><circle cx="1002.5" cy="510.9" r="2.4" fill="#b4b7be"/><text x="1055.60" y="510.00" font-size="23.76" font-weight="700" fill="#243447" letter-spacing="0.500" stroke="#243447" stroke-width="0.9" stroke-linejoin="round">Revenue Percentage to Budget</text><circle cx="1784.8" cy="492.6" r="2.4" fill="#b4b7be"/><circle cx="1784.8" cy="500.8" r="2.4" fill="#b4b7be"/><circle cx="1784.8" cy="508.9" r="2.4" fill="#b4b7be"/><text x="60.60" y="1184.80" font-size="23.76" font-weight="700" fill="#243447" letter-spacing="0.305" stroke="#243447" stroke-width="0.9" stroke-linejoin="round">Net Income by Period</text><circle cx="1002.6" cy="1167.6" r="2.4" fill="#b4b7be"/><circle cx="1002.6" cy="1175.8" r="2.4" fill="#b4b7be"/><circle cx="1002.6" cy="1183.9" r="2.4" fill="#b4b7be"/><text x="1055.50" y="1182.90" font-size="23.76" font-weight="700" fill="#243447" letter-spacing="0.403" stroke="#243447" stroke-width="0.9" stroke-linejoin="round">Payroll Expenses versus Budget</text><g transform="translate(0.9,1.0)"><text x="411.10" y="557.10" font-size="25.7" font-weight="700" fill="#1e293b" letter-spacing="-0.753" stroke="#1e293b" stroke-width="0.5">Revenue by Company</text><text x="410.10" y="1230.40" font-size="25.7" font-weight="700" fill="#1e293b" letter-spacing="-0.295" stroke="#1e293b" stroke-width="0.5">Net Income by Period</text><text x="1241.40" y="1228.60" font-size="25.7" font-weight="700" fill="#1e293b" letter-spacing="-0.848" stroke="#1e293b" stroke-width="0.5">Payroll Expenses versus Budget</text><defs><filter id="ps" x="-20%" y="-20%" width="140%" height="140%"><feDropShadow dx="0" dy="3" stdDeviation="9" flood-color="#000" flood-opacity=".2"/></filter></defs><path d="M539.1 869L539.10 653.80A215.2 215.2 0 0 1 684.83 1027.35Z" fill="#5470c6" filter="url(#ps)"/><path d="M539.1 869L684.83 1027.35A215.2 215.2 0 0 1 684.63 1027.53Z" fill="#91cc75" filter="url(#ps)"/><path d="M539.1 869L684.63 1027.53A215.2 215.2 0 0 1 655.66 1049.90Z" fill="#fac858" filter="url(#ps)"/><path d="M539.1 869L655.66 1049.90A215.2 215.2 0 0 1 642.77 1057.58Z" fill="#ee6666" filter="url(#ps)"/><path d="M539.1 869L642.77 1057.58A215.2 215.2 0 0 1 435.90 1057.84Z" fill="#73c0de" filter="url(#ps)"/><path d="M539.1 869L435.90 1057.84A215.2 215.2 0 0 1 429.21 1054.02Z" fill="#3ba272" filter="url(#ps)"/><path d="M539.1 869L429.21 1054.02A215.2 215.2 0 0 1 428.62 1053.68Z" fill="#fc8452" filter="url(#ps)"/><path d="M539.1 869L428.62 1053.68A215.2 215.2 0 0 1 539.10 653.80Z" fill="#9a60b4" filter="url(#ps)"/><path d="M539.1 869L539.10 653.80M539.1 869L684.83 1027.35M539.1 869L684.63 1027.53M539.1 869L655.66 1049.90M539.1 869L642.77 1057.58M539.1 869L435.90 1057.84M539.1 869L429.21 1054.02M539.1 869L428.62 1053.68" stroke="rgba(255,255,255,.35)" stroke-width="1.1" fill="none"/><path d="M742.3 791.0L767.1 780.1L797.8 780.1" fill="none" stroke="#5470c6" stroke-width="2"/><text x="808.20" y="786.87" font-size="23.2" fill="#475569" letter-spacing="-0.125">CO 1: 38.16%</text><path d="M332.2 811.8L312.4 804.3L283.7 804.3" fill="none" stroke="#9a60b4" stroke-width="2"/><text x="89.53" y="811.14" font-size="23.2" fill="#475569" letter-spacing="0.867">CO 200: 41.42%</text><path d="M684.9 1028.2L708.6 1048.5L739.4 1048.5" fill="none" stroke="#91cc75" stroke-width="2"/><text x="749.76" y="1055.81" font-size="23.2" fill="#475569" letter-spacing="0.866">CO 50: 0.02%</text><path d="M671.5 1039.6L680.4 1076.7L711.1 1076.7" fill="none" stroke="#fac858" stroke-width="2"/><text x="722.02" y="1083.55" font-size="23.2" fill="#475569" letter-spacing="0.325">CO 60: 2.71%</text><path d="M650.2 1054.4L650.2 1104.5L670.0 1104.5" fill="none" stroke="#ee6666" stroke-width="2"/><text x="680.42" y="1111.78" font-size="23.2" fill="#475569" letter-spacing="-0.528">CO 70: 1.11%</text><path d="M540.2 1084.2L540.2 1132.7L569.0 1132.7" fill="none" stroke="#73c0de" stroke-width="2"/><text x="579.87" y="1140.01" font-size="23.2" fill="#475569" letter-spacing="0.577">CO 80: 15.96%</text><path d="M433.8 1055.9L417.9 1107.9L389.2 1107.9" fill="none" stroke="#3ba272" stroke-width="2"/><text x="211.87" y="1114.75" font-size="23.2" fill="#475569" letter-spacing="0.494">CO 104: 0.57%</text><path d="M429.8 1054.4L386.7 1079.7L357.0 1079.7" fill="none" stroke="#fc8452" stroke-width="2"/><text x="180.17" y="1086.52" font-size="23.2" fill="#475569" letter-spacing="0.412">CO 150: 0.05%</text><path d="M1252.71 1043.29A249.6 249.6 0 1 1 1605.69 1043.29" fill="none" stroke="#5470c6" stroke-width="23.80000000000001"/><path d="M1275.05 1020.95L1291.67 1004.33" stroke="#5470c6" stroke-width="3.8"/><path d="M1261.23 1005.76L1270.17 998.36" stroke="#5470c6" stroke-width="2.1"/><path d="M1248.90 989.33L1258.49 982.81" stroke="#5470c6" stroke-width="2.1"/><path d="M1238.17 971.82L1248.33 966.23" stroke="#5470c6" stroke-width="2.1"/><path d="M1229.13 953.38L1239.78 948.77" stroke="#5470c6" stroke-width="2.1"/><path d="M1221.87 934.17L1244.22 926.90" stroke="#5470c6" stroke-width="3.8"/><path d="M1216.45 914.36L1227.77 911.82" stroke="#5470c6" stroke-width="2.1"/><path d="M1212.92 894.12L1224.43 892.67" stroke="#5470c6" stroke-width="2.1"/><path d="M1211.31 873.65L1222.90 873.28" stroke="#5470c6" stroke-width="2.1"/><path d="M1211.63 853.11L1223.21 853.84" stroke="#5470c6" stroke-width="2.1"/><path d="M1213.88 832.70L1237.09 836.37" stroke="#5470c6" stroke-width="3.8"/><path d="M1218.05 812.59L1229.28 815.47" stroke="#5470c6" stroke-width="2.1"/><path d="M1224.09 792.96L1235.00 796.88" stroke="#5470c6" stroke-width="2.1"/><path d="M1231.95 773.98L1242.44 778.92" stroke="#5470c6" stroke-width="2.1"/><path d="M1241.56 755.83L1251.54 761.73" stroke="#5470c6" stroke-width="2.1"/><path d="M1252.83 738.66L1271.85 752.48" stroke="#5470c6" stroke-width="3.8"/><path d="M1265.68 722.63L1274.38 730.31" stroke="#5470c6" stroke-width="2.1"/><path d="M1279.97 707.88L1287.91 716.34" stroke="#5470c6" stroke-width="2.1"/><path d="M1295.59 694.55L1302.70 703.71" stroke="#5470c6" stroke-width="2.1"/><path d="M1312.39 682.74L1318.61 692.53" stroke="#5470c6" stroke-width="2.1"/><path d="M1330.23 672.56L1340.90 693.50" stroke="#5470c6" stroke-width="3.8"/><path d="M1348.95 664.11L1353.22 674.89" stroke="#5470c6" stroke-width="2.1"/><path d="M1368.38 657.46L1371.62 668.60" stroke="#5470c6" stroke-width="2.1"/><path d="M1388.35 652.66L1390.52 664.06" stroke="#5470c6" stroke-width="2.1"/><path d="M1408.68 649.77L1409.78 661.32" stroke="#5470c6" stroke-width="2.1"/><path d="M1429.20 648.80L1429.20 672.30" stroke="#5470c6" stroke-width="3.8"/><path d="M1449.72 649.77L1448.62 661.32" stroke="#5470c6" stroke-width="2.1"/><path d="M1470.05 652.66L1467.88 664.06" stroke="#5470c6" stroke-width="2.1"/><path d="M1490.02 657.46L1486.78 668.60" stroke="#5470c6" stroke-width="2.1"/><path d="M1509.45 664.11L1505.18 674.89" stroke="#5470c6" stroke-width="2.1"/><path d="M1528.17 672.56L1517.50 693.50" stroke="#5470c6" stroke-width="3.8"/><path d="M1546.01 682.74L1539.79 692.53" stroke="#5470c6" stroke-width="2.1"/><path d="M1562.81 694.55L1555.70 703.71" stroke="#5470c6" stroke-width="2.1"/><path d="M1578.43 707.88L1570.49 716.34" stroke="#5470c6" stroke-width="2.1"/><path d="M1592.72 722.63L1584.02 730.31" stroke="#5470c6" stroke-width="2.1"/><path d="M1605.57 738.66L1586.55 752.48" stroke="#5470c6" stroke-width="3.8"/><path d="M1616.84 755.83L1606.86 761.73" stroke="#5470c6" stroke-width="2.1"/><path d="M1626.45 773.98L1615.96 778.92" stroke="#5470c6" stroke-width="2.1"/><path d="M1634.31 792.96L1623.40 796.88" stroke="#5470c6" stroke-width="2.1"/><path d="M1640.35 812.59L1629.12 815.47" stroke="#5470c6" stroke-width="2.1"/><path d="M1644.52 832.70L1621.31 836.37" stroke="#5470c6" stroke-width="3.8"/><path d="M1646.77 853.11L1635.19 853.84" stroke="#5470c6" stroke-width="2.1"/><path d="M1647.09 873.65L1635.50 873.28" stroke="#5470c6" stroke-width="2.1"/><path d="M1645.48 894.12L1633.97 892.67" stroke="#5470c6" stroke-width="2.1"/><path d="M1641.95 914.36L1630.63 911.82" stroke="#5470c6" stroke-width="2.1"/><path d="M1636.53 934.17L1614.18 926.90" stroke="#5470c6" stroke-width="3.8"/><path d="M1629.27 953.38L1618.62 948.77" stroke="#5470c6" stroke-width="2.1"/><path d="M1620.23 971.82L1610.07 966.23" stroke="#5470c6" stroke-width="2.1"/><path d="M1609.50 989.33L1599.91 982.81" stroke="#5470c6" stroke-width="2.1"/><path d="M1597.17 1005.76L1588.23 998.36" stroke="#5470c6" stroke-width="2.1"/><path d="M1583.35 1020.95L1566.73 1004.33" stroke="#5470c6" stroke-width="3.8"/><text x="1301.48" y="1000.42" font-size="21.8" fill="#64748b">0</text><text x="1255.35" y="928.40" font-size="21.8" fill="#64748b" letter-spacing="-1.100">10</text><text x="1250.73" y="844.20" font-size="21.8" fill="#64748b" letter-spacing="0.500">20</text><text x="1283.05" y="766.17" font-size="21.8" fill="#64748b" letter-spacing="0.500">30</text><text x="1347.27" y="721.02" font-size="21.8" fill="#64748b" letter-spacing="0.500">40</text><text x="1416.95" y="701.30" font-size="21.8" fill="#64748b" letter-spacing="0.500">50</text><text x="1486.63" y="721.02" font-size="21.8" fill="#64748b" letter-spacing="0.500">60</text><text x="1550.85" y="766.17" font-size="21.8" fill="#64748b" letter-spacing="0.500">70</text><text x="1583.17" y="844.20" font-size="21.8" fill="#64748b" letter-spacing="0.500">80</text><text x="1576.55" y="928.40" font-size="21.8" fill="#64748b" letter-spacing="0.500">90</text><text x="1521.62" y="1000.42" font-size="21.8" fill="#64748b" letter-spacing="-0.350">100</text><path d="M1407.48 877.02L1434.31 877.66L1584.11 793.91L1424.09 855.94Z" fill="#fe0030"/><g transform="translate(-0.9,-1.0)"><path d="M334.1 1449.4H996.0" stroke="#eef2f7" stroke-width="2"/><path d="M334.1 1400.0H996.0" stroke="#eef2f7" stroke-width="2"/><path d="M334.1 1352.6H996.0" stroke="#eef2f7" stroke-width="2"/><path d="M334.1 1302.6H996.0" stroke="#eef2f7" stroke-width="2"/><text x="305.40" y="1503.60" font-size="21.8" fill="#64748b">0</text><text x="212.00" y="1454.00" font-size="21.8" fill="#64748b" letter-spacing="1.050">3,000,000</text><text x="212.00" y="1404.60" font-size="21.8" fill="#64748b" letter-spacing="1.050">6,000,000</text><text x="212.00" y="1357.20" font-size="21.8" fill="#64748b" letter-spacing="1.050">9,000,000</text><text x="202.80" y="1307.20" font-size="21.8" fill="#64748b" letter-spacing="0.622">12,000,000</text><path d="M333.1 1499.0H997.6" stroke="#e2e8f0" stroke-width="1.8" fill="none"/><path d="M334.1 1499.0v11" stroke="#e2e8f0" stroke-width="1.8"/><path d="M394.3 1499.0v11" stroke="#e2e8f0" stroke-width="1.8"/><path d="M454.5 1499.0v11" stroke="#e2e8f0" stroke-width="1.8"/><path d="M514.7 1499.0v11" stroke="#e2e8f0" stroke-width="1.8"/><path d="M574.9 1499.0v11" stroke="#e2e8f0" stroke-width="1.8"/><path d="M635.0 1499.0v11" stroke="#e2e8f0" stroke-width="1.8"/><path d="M695.2 1499.0v11" stroke="#e2e8f0" stroke-width="1.8"/><path d="M755.4 1499.0v11" stroke="#e2e8f0" stroke-width="1.8"/><path d="M815.6 1499.0v11" stroke="#e2e8f0" stroke-width="1.8"/><path d="M875.8 1499.0v11" stroke="#e2e8f0" stroke-width="1.8"/><path d="M936.0 1499.0v11" stroke="#e2e8f0" stroke-width="1.8"/><path d="M996.2 1499.0v11" stroke="#e2e8f0" stroke-width="1.8"/><path d="M334.1 1474.6L394.3 1508.6L454.5 1498.2L514.7 1501.9L574.9 1501.9L635.0 1497.5L695.2 1497.0L755.4 1340.1L815.6 1336.7L875.8 1331.3L936.0 1312.9L996.2 1304.8" fill="none" stroke="#5470c6" stroke-width="3.9" stroke-linejoin="round"/><circle cx="334.1" cy="1474.6" r="5.9" fill="#5470c6"/><circle cx="394.3" cy="1508.6" r="5.9" fill="#5470c6"/><circle cx="454.5" cy="1498.2" r="5.9" fill="#5470c6"/><circle cx="514.7" cy="1501.9" r="5.9" fill="#5470c6"/><circle cx="574.9" cy="1501.9" r="5.9" fill="#5470c6"/><circle cx="635.0" cy="1497.5" r="5.9" fill="#5470c6"/><circle cx="695.2" cy="1497.0" r="5.9" fill="#5470c6"/><circle cx="755.4" cy="1340.1" r="5.9" fill="#5470c6"/><circle cx="815.6" cy="1336.7" r="5.9" fill="#5470c6"/><circle cx="875.8" cy="1331.3" r="5.9" fill="#5470c6"/><circle cx="936.0" cy="1312.9" r="5.9" fill="#5470c6"/><circle cx="996.2" cy="1304.8" r="5.9" fill="#5470c6"/><g transform="translate(133.2,1424.6) rotate(-90)"><text x="-41.75" y="0.00" font-size="23.76" font-weight="700" fill="#64748b" letter-spacing="0.417">Dollars</text></g></g><g transform="translate(0,0)"><path d="M1343.5 1301.5H1777.6" stroke="#eef2f7" stroke-width="2"/><path d="M1343.5 1354.8H1777.6" stroke="#eef2f7" stroke-width="2"/><path d="M1343.5 1408.1H1777.6" stroke="#eef2f7" stroke-width="2"/><path d="M1343.5 1461.4H1777.6" stroke="#eef2f7" stroke-width="2"/><text x="1199.30" y="1306.10" font-size="21.8" fill="#64748b" letter-spacing="0.640">120,000,000</text><text x="1198.60" y="1359.40" font-size="21.8" fill="#64748b" letter-spacing="0.710">100,000,000</text><text x="1208.40" y="1412.70" font-size="21.8" fill="#64748b" letter-spacing="1.033">80,000,000</text><text x="1207.80" y="1466.00" font-size="21.8" fill="#64748b" letter-spacing="1.100">60,000,000</text><text x="1208.10" y="1519.30" font-size="21.8" fill="#64748b" letter-spacing="1.067">40,000,000</text><rect x="1358.2" y="1366.9" width="36.3" height="147.1" fill="#5470c6"/><rect x="1401.5" y="1328.9" width="36.3" height="185.1" fill="#91cc75"/><rect x="1727.8" y="1367.1" width="35.8" height="146.9" fill="#91cc75"/><g transform="translate(1164.5,1460.2) rotate(-90)"><text x="-40.70" y="0.00" font-size="23.76" font-weight="700" fill="#64748b" letter-spacing="0.067">Dollars</text></g></g></g></svg>
</div>
<div class="b" style="left:2165.20px;top:314.30px;width:17.00px;height:1194.80px;background:#fff;"></div>
<div class="b" style="left:2165.40px;top:314.30px;width:16.80px;height:341.80px;background:#cbd5e1;border-radius:8.4px;"></div>
<div class="b" style="left:2182.20px;top:138.90px;width:2.20px;height:1371.10px;background:#e2e8f0;"></div>
<div class="b" style="left:2184.40px;top:138.90px;width:614.60px;height:1371.10px;background:#fff;"></div>
<div class="b" style="left:2799.00px;top:139.60px;width:2.20px;height:1370.40px;background:#e2e8f0;"></div>
<div class="b" style="left:2801.20px;top:139.60px;width:51.80px;height:1370.40px;background:#fff;"></div>
<div class="b" style="left:2185.20px;top:138.90px;width:613.80px;height:69.60px;background:#f8fafc;"></div>
<div class="b" style="left:2185.20px;top:208.50px;width:613.80px;height:2.10px;background:#e2e8f0;"></div>
<div class="b" style="left:2356.10px;top:204.80px;width:197.00px;height:3.70px;background:#0f4c81;"></div>
<svg class="b" style="left:2215.80px;top:154.20px;opacity:1;" width="35.2" height="35.2" viewBox="0 0 24 24" fill="none" stroke="#94a3b8" stroke-width="1.7" stroke-linecap="round" stroke-linejoin="round"><rect x="3" y="3" width="7.5" height="7.5" rx="1.2"/><rect x="13.5" y="3" width="7.5" height="7.5" rx="1.2"/><rect x="3" y="13.5" width="7.5" height="7.5" rx="1.2"/><rect x="13.5" y="13.5" width="7.5" height="7.5" rx="1.2"/></svg>
<svg class="b tx" width="1" height="1"><text x="2263.20" y="181.60" font-size="26.4" fill="#94a3b8" letter-spacing="0.525">Build</text></svg>
<svg class="b" style="left:2387.00px;top:154.30px;opacity:1;" width="34.6" height="34.6" viewBox="0 0 24 24" fill="none" stroke="#0f4c81" stroke-width="1.75" stroke-linecap="round" stroke-linejoin="round"><path d="M4 21v-7M4 10V3M12 21v-9M12 8V3M20 21v-5M20 12V3M1 14h6M9 8h6M17 16h6"/></svg>
<svg class="b tx" width="1" height="1"><text x="2433.50" y="181.60" font-size="26.4" font-weight="700" fill="#0f4c81" letter-spacing="-0.220">Format</text></svg>
<svg class="b" style="left:2750px;top:163px" width="18" height="24" viewBox="0 0 18 24" fill="none" stroke="#94a3b8" stroke-width="2.2" stroke-linecap="round" stroke-linejoin="round"><path d="M5 4.5l8 7.5-8 7.5"/></svg>
<svg class="b" style="left:2817px;top:163px" width="18" height="24" viewBox="0 0 18 24" fill="none" stroke="#94a3b8" stroke-width="2.2" stroke-linecap="round" stroke-linejoin="round"><path d="M13 4.5l-8 7.5 8 7.5"/></svg>
<svg class="b" style="left:2806px;top:200px" width="44" height="170" viewBox="0 0 44 170"><g transform="translate(12.2,15.2) rotate(90)"><text x="0.00" y="0.00" font-size="25.6" font-weight="700" fill="#94a3b8" letter-spacing="0.378">Data Model</text></g></svg>
<div class="b" style="left:0;top:-1.0px;width:0;height:0">
<div class="b" style="left:2185.20px;top:211.40px;width:613.80px;height:67.10px;background:#f8fafc;"></div>
<svg class="b" style="left:2211px;top:235.9px" width="24" height="18" viewBox="0 0 24 18" fill="none" stroke="#94a3b8" stroke-width="2.4" stroke-linecap="round" stroke-linejoin="round"><path d="M3.6 5.2 12 13.2 20.4 5.2"/></svg>
<svg class="b tx" width="1" height="1"><text x="2247.40" y="254.55" font-size="26.4" font-weight="700" fill="#1e293b" letter-spacing="0.220">Canvas</text></svg>
<div class="b" style="left:2185.00px;top:332.40px;width:615.00px;height:2.00px;background:#eef2f7;"></div>
<div class="b" style="left:2490.00px;top:278.50px;width:2.20px;height:53.90px;background:#e8edf3;"></div>
<svg class="b tx" width="1" height="1"><text x="2208.00" y="313.35" font-size="22" font-weight="700" fill="#94a3b8" letter-spacing="0.264">MODE</text></svg>
<svg class="b tx" width="1" height="1"><text x="2514.20" y="315.05" font-size="26.4" fill="#0f172a" letter-spacing="0.667">Auto</text></svg>
<svg class="b" style="left:2757px;top:295.4px" width="22" height="18" viewBox="0 0 22 18" fill="none" stroke="#0f172a" stroke-width="2.3" stroke-linecap="round" stroke-linejoin="round"><path d="M2.8 5.2 11 13 19.2 5.2"/></svg>
<div class="b" style="left:2185.00px;top:383.50px;width:615.00px;height:2.00px;background:#eef2f7;"></div>
<div class="b" style="left:2490.00px;top:334.20px;width:2.20px;height:49.30px;background:#e8edf3;"></div>
<svg class="b tx" width="1" height="1"><text x="2208.00" y="366.75" font-size="22" font-weight="700" fill="#94a3b8" letter-spacing="0.264">WIDTH</text></svg>
<svg class="b tx" width="1" height="1"><text x="2505.60" y="368.65" font-size="27.2" fill="#0f172a" letter-spacing="-0.867">1920</text></svg>
<div class="b" style="left:2185.00px;top:435.20px;width:615.00px;height:2.00px;background:#eef2f7;"></div>
<div class="b" style="left:2490.00px;top:385.30px;width:2.20px;height:49.90px;background:#e8edf3;"></div>
<svg class="b tx" width="1" height="1"><text x="2208.00" y="418.15" font-size="22" font-weight="700" fill="#94a3b8" letter-spacing="0.264">HEIGHT</text></svg>
<svg class="b tx" width="1" height="1"><text x="2505.60" y="420.05" font-size="27.2" fill="#0f172a" letter-spacing="-0.667">1080</text></svg>
<div class="b" style="left:2185.00px;top:597.40px;width:615.00px;height:2.00px;background:#eef2f7;"></div>
<div class="b" style="left:2490.00px;top:437.20px;width:2.20px;height:160.20px;background:#e8edf3;"></div>
<svg class="b tx" width="1" height="1"><text x="2208.00" y="525.20" font-size="22" font-weight="700" fill="#94a3b8" letter-spacing="0.264">PRESETS</text></svg>
<div class="b" style="left:2505.30px;top:445.50px;width:165.00px;height:40.70px;background:#fff;border:2.2px solid #cbd5e1;border-radius:8px;box-sizing:border-box;"></div>
<svg class="b tx" width="1" height="1"><text x="2525.30" y="474.55" font-size="24.2" fill="#1e293b" letter-spacing="0.387">1920×1080</text></svg>
<div class="b" style="left:2505.30px;top:496.40px;width:152.90px;height:40.80px;background:#fff;border:2.2px solid #cbd5e1;border-radius:8px;box-sizing:border-box;"></div>
<svg class="b tx" width="1" height="1"><text x="2525.30" y="525.50" font-size="24.2" fill="#1e293b" letter-spacing="0.714">1366×768</text></svg>
<div class="b" style="left:2505.30px;top:547.40px;width:152.90px;height:40.00px;background:#fff;border:2.2px solid #cbd5e1;border-radius:8px;box-sizing:border-box;"></div>
<svg class="b tx" width="1" height="1"><text x="2525.30" y="576.10" font-size="24.2" fill="#1e293b" letter-spacing="0.757">1280×720</text></svg>
<div class="b" style="left:2185.00px;top:656.40px;width:615.00px;height:2.00px;background:#eef2f7;"></div>
<div class="b" style="left:2490.00px;top:599.40px;width:2.20px;height:57.00px;background:#e8edf3;"></div>
<svg class="b tx" width="1" height="1"><text x="2208.00" y="635.80" font-size="22" font-weight="700" fill="#94a3b8" letter-spacing="0.264">BACKGROUND</text></svg>
<div class="b" style="left:2510.10px;top:617.50px;width:271.70px;height:21.30px;background:#fff;border:2px solid #767676;box-sizing:border-box;"></div>
<div class="b" style="left:2185.20px;top:656.40px;width:613.80px;height:2.40px;background:#e2e8f0;"></div>
<div class="b" style="left:2185.20px;top:658.80px;width:613.80px;height:68.50px;background:#f8fafc;"></div>
<svg class="b" style="left:2211px;top:684.0px" width="24" height="18" viewBox="0 0 24 18" fill="none" stroke="#94a3b8" stroke-width="2.4" stroke-linecap="round" stroke-linejoin="round"><path d="M3.6 5.2 12 13.2 20.4 5.2"/></svg>
<svg class="b tx" width="1" height="1"><text x="2247.40" y="702.65" font-size="26.4" font-weight="700" fill="#1e293b" letter-spacing="-0.300">Snap</text></svg>
<div class="b" style="left:2185.00px;top:777.00px;width:615.00px;height:2.00px;background:#eef2f7;"></div>
<div class="b" style="left:2490.00px;top:727.30px;width:2.20px;height:49.70px;background:#e8edf3;"></div>
<svg class="b tx" width="1" height="1"><text x="2208.00" y="760.05" font-size="22" font-weight="700" fill="#94a3b8" letter-spacing="0.264">THRESHOLD</text></svg>
<svg class="b tx" width="1" height="1"><text x="2505.60" y="761.95" font-size="27.2" fill="#0f172a">8</text></svg>
<svg class="b tx" width="1" height="1"><text x="2759.10" y="760.15" font-size="24.2" fill="#94a3b8" letter-spacing="-0.100">px</text></svg>
<div class="b" style="left:2185.00px;top:841.40px;width:615.00px;height:2.00px;background:#eef2f7;"></div>
<div class="b" style="left:2490.00px;top:779.00px;width:2.20px;height:62.40px;background:#e8edf3;"></div>
<svg class="b tx" width="1" height="1"><text x="2208.00" y="818.10" font-size="22" font-weight="700" fill="#94a3b8" letter-spacing="0.264">MAGNETIC</text></svg>
<div class="b" style="left:2505.30px;top:787.80px;width:79.70px;height:44.00px;background:#0f4c81;border-radius:22px;"></div>
<div class="b" style="left:2544.20px;top:791.50px;width:36.60px;height:36.60px;background:#fff;border-radius:50%;"></div>
<div class="b" style="left:2185.20px;top:841.40px;width:613.80px;height:3.00px;background:#e2e8f0;"></div>
</div>
<div class="b" style="left:-4.00px;top:1509.10px;width:2860.00px;height:2.20px;background:#e2e8f0;"></div>
<div class="b" style="left:-4.00px;top:1511.30px;width:2860.00px;height:54.70px;background:#f8fafc;"></div>
<svg class="b tx" width="1" height="1"><text x="25.50" y="1544.60" font-size="24.2" fill="#a3b1c6" letter-spacing="0.781">6 controls on "Finance Dashboard"</text></svg>
<svg class="b tx" width="1" height="1"><text x="2313.40" y="1544.90" font-size="24.2" fill="#a3b1c6" letter-spacing="0.056">Grid: 10px</text></svg>
<svg class="b tx" width="1" height="1"><text x="2454.50" y="1544.90" font-size="24.2" fill="#a3b1c6" letter-spacing="0.100">Snap: On</text></svg>
<div class="b" style="left:2585.00px;top:1523.50px;width:2.20px;height:25.80px;background:#e2e8f0;"></div>
<svg class="b tx" width="1" height="1"><text x="2630.00" y="1545.60" font-size="26.4" font-weight="700" fill="#94a3b8">-</text></svg>
<svg class="b tx" width="1" height="1"><text x="2693.60" y="1545.60" font-size="24.2" fill="#94a3b8" letter-spacing="1.250">90%</text></svg>
<svg class="b tx" width="1" height="1"><text x="2795.60" y="1546.20" font-size="28.4" font-weight="700" fill="#94a3b8">+</text></svg>
<div class="b" style="left:1740.7px;top:1157.4px;width:398.8px;height:360.4px;background:rgba(255,255,255,.87);border:2px solid #e2e8f0;border-radius:10px;box-sizing:border-box;box-shadow:0 8px 30px rgba(15,23,42,.15),0 2px 8px rgba(15,23,42,.07)"></div>
<div class="b" style="left:1742.70px;top:1206.60px;width:394.80px;height:2.20px;background:#e2e8f0;"></div>
<svg class="b tx" width="1" height="1"><text x="1755.00" y="1192.60" font-size="22.2" font-weight="700" fill="#a3b1c6" letter-spacing="0.200">OVERVIEW</text></svg>
<svg class="b" style="left:2096.6px;top:1174.4px" width="20" height="20" viewBox="0 0 20 20" stroke="#cbd5e1" stroke-width="2.6" stroke-linecap="round"><path d="M3 3l14 14M17 3L3 17"/></svg>
<div class="b" style="left:1758.00px;top:1224.90px;width:378.50px;height:220.20px;background:rgba(241,245,249,.92);"></div>
<div class="b" style="left:1880.00px;top:1228.10px;width:52.70px;height:26.00px;background:#d3dae3;"></div>
<div class="b" style="left:1935.50px;top:1228.10px;width:52.60px;height:26.00px;background:#d3dae3;"></div>
<div class="b" style="left:1759.20px;top:1254.10px;width:175.70px;height:119.40px;background:rgba(99,102,241,.33);border:1px solid rgba(99,102,241,.38);box-sizing:border-box;"></div>
<div class="b" style="left:1934.90px;top:1254.10px;width:138.70px;height:119.40px;background:rgba(99,102,241,.33);border:1px solid rgba(99,102,241,.38);box-sizing:border-box;"></div>
<div class="b" style="left:1759.20px;top:1373.50px;width:175.70px;height:111.80px;background:rgba(99,102,241,.33);border:1px solid rgba(99,102,241,.38);box-sizing:border-box;"></div>
<div class="b" style="left:1934.90px;top:1373.50px;width:138.70px;height:111.80px;background:rgba(99,102,241,.33);border:1px solid rgba(99,102,241,.38);box-sizing:border-box;"></div>
<div class="b" style="left:1757.60px;top:1224.60px;width:379.00px;height:220.70px;border:3.2px solid #2c5f8d;box-sizing:border-box;"></div>
</div></div>
</body></html>
